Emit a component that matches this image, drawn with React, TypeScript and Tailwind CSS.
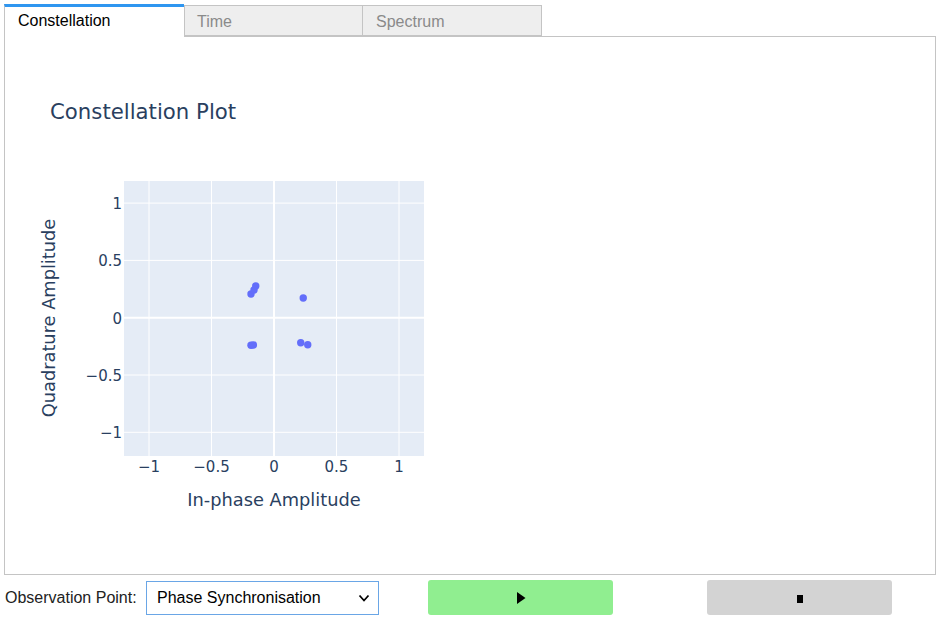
import React from "react";

// constellation samples (I, Q)
const samples: [number, number][] = [
  [-0.184, 0.207],
  [-0.146, 0.277],
  [-0.16, 0.242],
  [0.234, 0.172],
  [-0.184, -0.24],
  [-0.165, -0.238],
  [0.214, -0.218],
  [0.27, -0.236],
];

const ticks = [-1, -0.5, 0, 0.5, 1];

const px = (x: number) => 274 + x * 125;
const py = (y: number) => 317.7 - y * 114.6;

const fmt = (t: number) => (t < 0 ? "\u2212" + String(-t) : String(t));

function ConstellationPlot() {
  const font = "'DejaVu Sans', verdana, arial, sans-serif";
  return (
    <svg width="460" height="500" viewBox="5 37 460 500" className="block">
      <text x="50" y="119" fontFamily={font} fontSize="21.25" fill="#2a3f5f">
        Constellation Plot
      </text>
      <rect x="124" y="181" width="300" height="275" fill="#e5ecf6" />
      {ticks.map((t) => (
        <line
          key={"gx" + t}
          x1={px(t)}
          x2={px(t)}
          y1="181"
          y2="456"
          stroke="#fff"
          strokeWidth={t === 0 ? 2 : 1}
        />
      ))}
      {ticks.map((t) => (
        <line
          key={"gy" + t}
          x1="124"
          x2="424"
          y1={py(t)}
          y2={py(t)}
          stroke="#fff"
          strokeWidth={t === 0 ? 2 : 1}
        />
      ))}
      {samples.map(([x, y], i) => (
        <circle key={i} cx={px(x)} cy={py(y)} r="3.7" fill="#636efa" />
      ))}
      {ticks.map((t) => (
        <text
          key={"ty" + t}
          x="122"
          y={py(t) + 6}
          textAnchor="end"
          fontFamily={font}
          fontSize="15"
          fill="#2a3f5f"
        >
          {fmt(t)}
        </text>
      ))}
      {ticks.map((t) => (
        <text
          key={"tx" + t}
          x={px(t)}
          y="472"
          textAnchor="middle"
          fontFamily={font}
          fontSize="15"
          fill="#2a3f5f"
        >
          {fmt(t)}
        </text>
      ))}
      <text x="274" y="506" textAnchor="middle" fontFamily={font} fontSize="17.8" fill="#2a3f5f">
        In-phase Amplitude
      </text>
      <text
        x="0"
        y="0"
        transform="translate(55 318) rotate(-90)"
        textAnchor="middle"
        fontFamily={font}
        fontSize="17.8"
        fill="#2a3f5f"
      >
        Quadrature Amplitude
      </text>
    </svg>
  );
}

export default function App() {
  return (
    <div className="w-[941px] h-[620px] bg-white pt-[4px] font-['Liberation_Sans',Arial,sans-serif] overflow-hidden">
      <div className="flex items-end h-[32px] pl-[4px]">
        <div className="relative z-10 w-[180px] h-[33px] -mb-px bg-white border-l border-[#c4c4c4] border-t-[3px] border-t-[#2f96f0] pl-[13px] pt-[2px] text-[16px] text-black">
          Constellation
        </div>
        <div className="w-[179px] h-[31px] bg-[#eeeeee] border border-[#c4c4c4] pl-[12px] pt-[4px] text-[16px] text-[#8a8a8a]">
          Time
        </div>
        <div className="w-[179px] h-[31px] bg-[#eeeeee] border border-l-0 border-[#c4c4c4] pl-[13px] pt-[4px] text-[16px] text-[#8a8a8a]">
          Spectrum
        </div>
      </div>
      <div className="ml-[4px] w-[932px] h-[539px] border border-[#c4c4c4]">
        <ConstellationPlot />
      </div>
      <div className="flex items-center h-[45px] pl-[5px] text-[16px]">
        <div className="w-[141px] text-[#222]">Observation Point:</div>
        <div className="w-[233px] h-[34px] border border-[#6aa6e6] bg-white flex items-center justify-between pl-[10px] pr-[8px] text-black">
          <span>Phase Synchronisation</span>
          <svg width="12" height="10" viewBox="0 0 12 10">
            <path d="M1.5 2.5 L6 7.5 L10.5 2.5" fill="none" stroke="#000" strokeWidth="1.8" />
          </svg>
        </div>
        <div className="ml-[49px] w-[185px] h-[35px] rounded-[3px] bg-[#90ee90] flex items-center justify-center">
          <svg width="10" height="12" viewBox="0 0 10 12">
            <path d="M1 0 L9.5 6 L1 12 Z" fill="#000" />
          </svg>
        </div>
        <div className="ml-[94px] w-[185px] h-[35px] rounded-[3px] bg-[#d3d3d3] flex items-center justify-center">
          <div className="w-[6px] h-[8px] bg-black mt-[2px]" />
        </div>
      </div>
    </div>
  );
}
